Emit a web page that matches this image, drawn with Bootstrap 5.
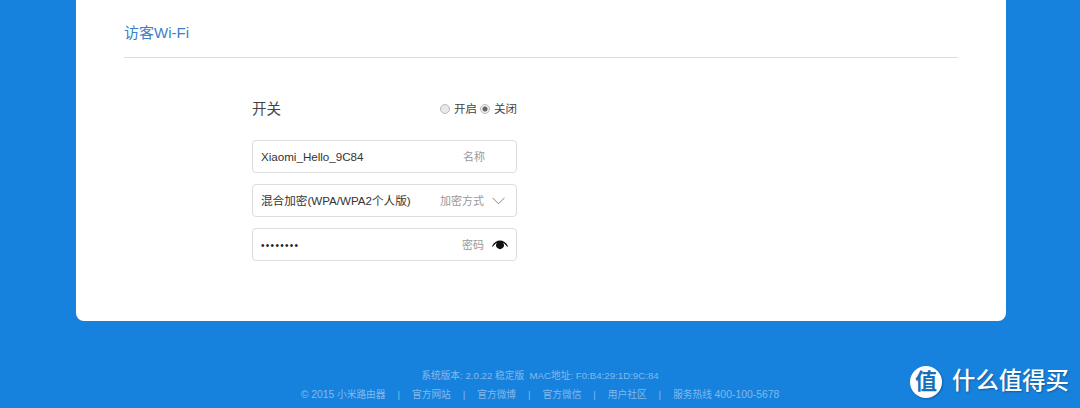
<!DOCTYPE html>
<html lang="zh-CN">
  <head>
    <meta charset="UTF-8" />
    <meta name="viewport" content="width=device-width, initial-scale=1.0" />
    <title>访客Wi-Fi</title>
    <link
      rel="stylesheet"
      href="https://cdn.jsdelivr.net/npm/bootstrap@5.3.0/dist/css/bootstrap.min.css"
    />
    <style>
      html,
      body {
        height: 408px;
        overflow: hidden;
      }
      body {
        background: #1782dd;
        font-family: "Liberation Sans", "Noto Sans CJK SC", sans-serif;
        color: #333;
      }
      .panel {
        width: 930px;
        height: 321px;
        margin-left: 76px;
        padding: 0 48px;
        background: #fff;
        border-radius: 0 0 8px 8px;
      }
      .panel-title {
        height: 58px;
        padding-top: 24px;
        font-size: 15px;
        line-height: 18px;
        color: #3d7fc9;
        border-bottom: 1px solid #ddd;
      }
      .wifi-form {
        width: 265px;
        margin-left: 128px;
        padding-top: 40px;
      }
      .switch-row {
        height: 24px;
        margin-bottom: 18px;
      }
      .switch-label {
        font-size: 14.5px;
        color: #444;
      }
      .radio-opt {
        font-size: 11.5px;
        color: #444;
      }
      .radio-dot {
        width: 10px;
        height: 10px;
        margin-right: 4px;
        margin-top: -3px;
        border: 1px solid #bbb;
        border-radius: 50%;
        background: #e8e8e8;
      }
      .radio-dot.is-on {
        margin-left: -1px;
        background: radial-gradient(circle, #666 0 2px, #eee 3px);
      }
      .field {
        height: 33px;
        margin-bottom: 11px;
        padding: 1px 11px 0 8px;
        border: 1px solid #ddd;
        border-radius: 4px;
        font-size: 11.6px;
        color: #333;
      }
      .field-eye {
        padding-right: 8px;
      }
      .field-hint {
        font-size: 11px;
        color: #999;
      }
      .hint-gap {
        margin-right: 20px;
      }
      .pw-dots {
        font-size: 10px;
        letter-spacing: 1.3px;
        color: #222;
      }
      .foot {
        padding-top: 45px;
        font-size: 9.7px;
        line-height: 19px;
        color: #82b9ec;
      }
      .foot-sep {
        margin: 0 12px;
      }
      .foot-latin {
        font-size: 10.4px;
      }
      .brand {
        position: absolute;
        left: 910px;
        top: 364px;
        color: #fff;
        text-shadow: 1px 1px 2px rgba(0, 0, 0, 0.3);
      }
      .brand-mark {
        width: 32px;
        height: 32px;
        border-radius: 50%;
        background: #fff;
        color: #1670b8;
        font-size: 22px;
        font-weight: 700;
        text-shadow: none;
        box-shadow: 1px 1px 2px rgba(0, 0, 0, 0.25);
      }
      .brand-name {
        margin-left: 10px;
        font-size: 23.4px;
        font-weight: 500;
      }
    </style>
  </head>
  <body>
    <!-- Guest Wi-Fi panel -->
    <div class="panel">
      <div class="panel-title">访客Wi-Fi</div>
      <form class="wifi-form">
        <div class="switch-row d-flex align-items-center justify-content-between">
          <span class="switch-label">开关</span>
          <span class="d-flex align-items-center">
            <span class="radio-dot"></span>
            <span class="radio-opt me-1">开启</span>
            <span class="radio-dot is-on"></span>
            <span class="radio-opt">关闭</span>
          </span>
        </div>
        <div class="field d-flex align-items-center">
          <span>Xiaomi_Hello_9C84</span>
          <span class="field-hint ms-auto hint-gap">名称</span>
        </div>
        <div class="field d-flex align-items-center">
          <span>混合加密(WPA/WPA2个人版)</span>
          <span class="field-hint ms-auto me-2">加密方式</span>
          <svg width="13" height="8" viewBox="0 0 13 8" fill="none" stroke="#888" stroke-width="1">
            <path d="M.5.8 6.5 6.8 12.5.8" />
          </svg>
        </div>
        <div class="field field-eye d-flex align-items-center">
          <span class="pw-dots">••••••••</span>
          <span class="field-hint ms-auto me-2">密码</span>
          <svg width="16" height="11" viewBox="0 0 16 11" fill="#111">
            <path d="M0 6.200C2 2.400 4.800.6 8 .6s6 1.800 8 5.600l-.8.5C13.800 4.700 12.600 3.600 11.200 2.900a3.900 3.900 0 1 1-6.400 0C3.400 3.600 2.200 4.700.8 6.700z" />
          </svg>
        </div>
      </form>
    </div>

    <!-- Footer -->
    <div class="foot text-center">
      <div>系统版本: 2.0.22 稳定版&nbsp;&nbsp;MAC地址: F0:B4:29:1D:9C:84</div>
      <div>
        <span class="foot-latin">© 2015</span> 小米路由器<span class="foot-sep">|</span>官方网站<span class="foot-sep">|</span>官方微博<span class="foot-sep">|</span>官方微信<span class="foot-sep">|</span>用户社区<span class="foot-sep">|</span>服务热线 <span class="foot-latin">400-100-5678</span>
      </div>
    </div>

    <!-- Watermark -->
    <div class="brand d-flex align-items-center">
      <span class="brand-mark d-flex align-items-center justify-content-center">值</span>
      <span class="brand-name">什么值得买</span>
    </div>

    <script src="https://cdn.jsdelivr.net/npm/bootstrap@5.3.0/dist/js/bootstrap.bundle.min.js"></script>
  </body>
</html>
